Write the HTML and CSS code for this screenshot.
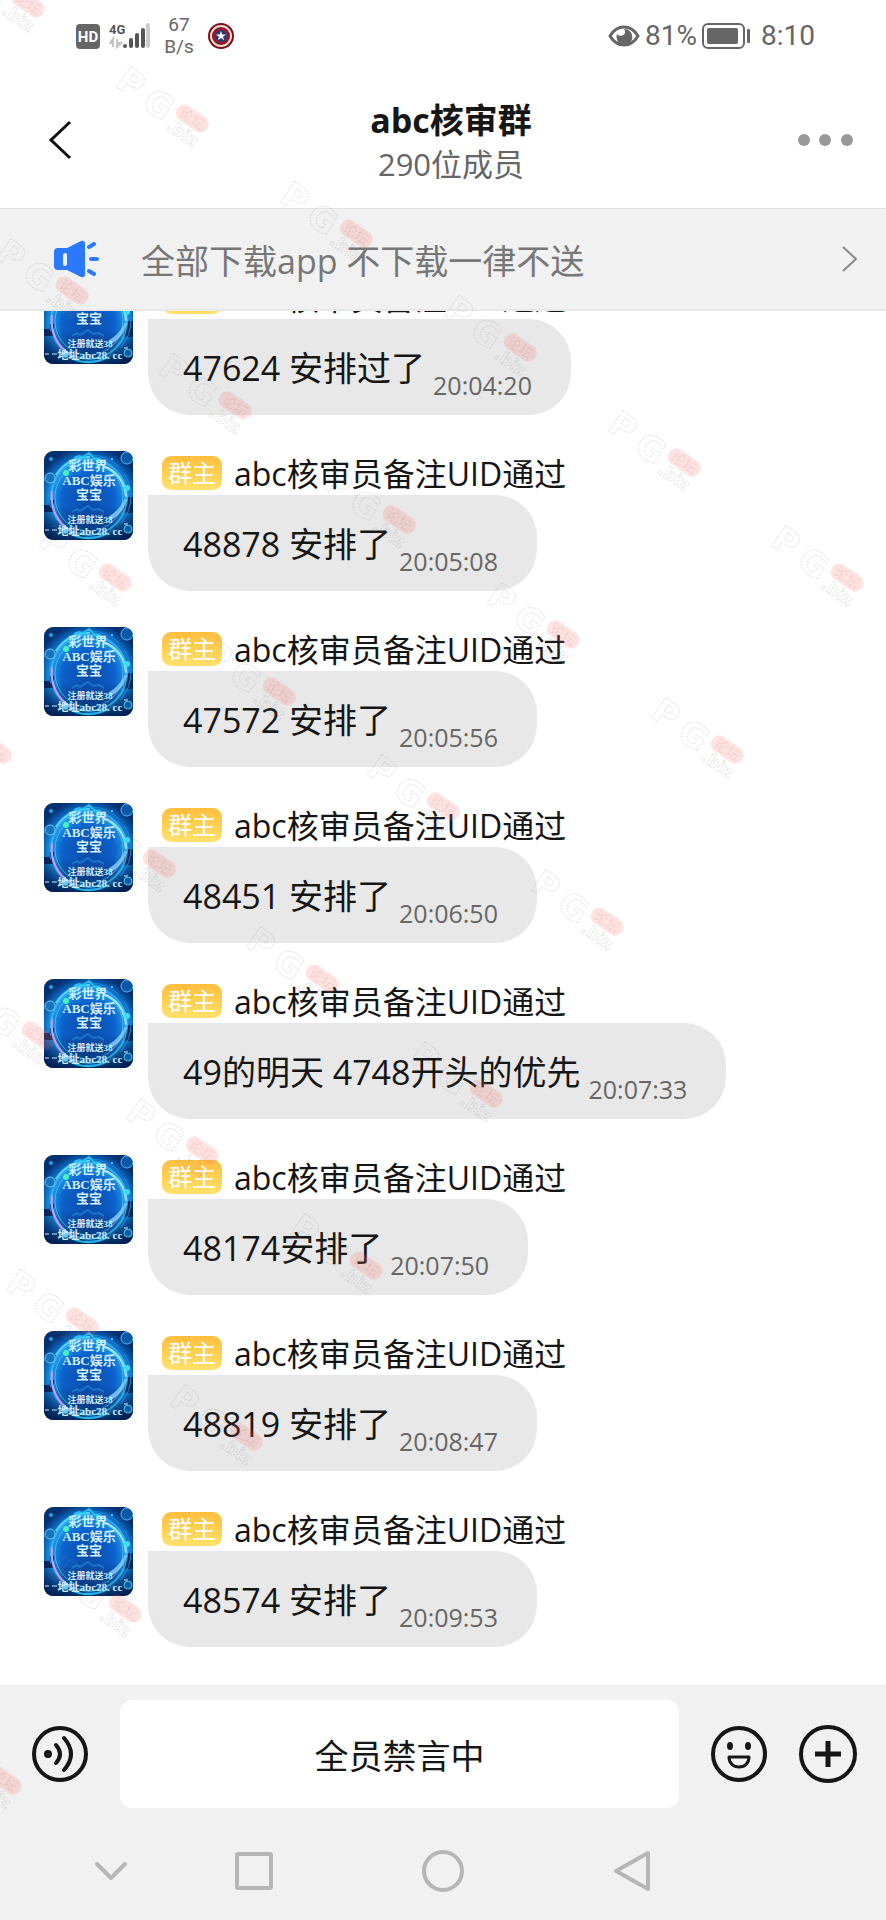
FILE: index.html
```html
<!DOCTYPE html>
<html lang="zh-CN">
<head>
    <meta charset="UTF-8">
    <meta name="viewport" content="width=device-width, initial-scale=1.0">
    <title>abc核审群</title>
    <link rel="stylesheet" href="styles.css">
</head>
<body>
    <!-- Shared drawings -->
    <svg class="defs" width="0" height="0" aria-hidden="true">
        <defs>
            <radialGradient id="glow" cx="50%" cy="55%" r="60%">
                <stop offset="0" stop-color="#0a4aa6"/>
                <stop offset="0.5" stop-color="#0c62cc"/>
                <stop offset="0.7" stop-color="#1a9ae6"/>
                <stop offset="0.86" stop-color="#0b5cb0"/>
                <stop offset="1" stop-color="#05306f"/>
            </radialGradient>
            <linearGradient id="ground" x1="0" y1="0" x2="0" y2="1">
                <stop offset="0" stop-color="#021c4c" stop-opacity="0"/>
                <stop offset="1" stop-color="#021c4c" stop-opacity="0.85"/>
            </linearGradient>
            <symbol id="avatar" viewBox="0 0 89 89">
                <rect width="89" height="89" fill="url(#glow)"/>
                <rect y="54" width="89" height="35" fill="url(#ground)"/>
                <path d="M0 54h5v-5h5v12H0zM80 50h4v-4h5v16h-9z" fill="#04265a"/>
                <circle cx="45" cy="46" r="38" fill="none" stroke="#39b4f5" stroke-width="2" opacity="0.8"/>
                <circle cx="45" cy="46" r="34" fill="none" stroke="#7fdcff" stroke-width="1" opacity="0.5"/>
                <circle cx="46" cy="45" r="41" fill="none" stroke="#1e8ae6" stroke-width="1" stroke-dasharray="30 9"/>
                <path d="M8 40C6 58 14 72 26 80" fill="none" stroke="#c79cf0" stroke-width="2"/>
                <path d="M62 16c12 6 19 17 20 30" fill="none" stroke="#9be9ff" stroke-width="2"/>
                <path d="M64 66c8-5 13-10 17-19l2 3c-4 10-9 15-16 19z" fill="#8fd2ff" opacity="0.8"/>
                <path d="M12 24c8-12 19-18 34-18" fill="none" stroke="#55d6ff" stroke-width="2"/>
                <path d="M30 7l5-2 4 1 6-4 5 5 7 1" fill="none" stroke="#1fc4f5" stroke-width="2"/>
                <path d="M28 61l5-3 3 2 8-5 5 4 6-1 5 3" fill="none" stroke="#2a9df0" stroke-width="2" opacity="0.5"/>
                <path d="M25 82c12 7 27 7 39 0" fill="none" stroke="#28b8ee" stroke-width="2"/>
                <circle cx="83" cy="7" r="6" fill="#0b58a8" stroke="#55bdf0" stroke-width="1"/>
                <circle cx="6" cy="27" r="5" fill="#1673c4" stroke="#66c5f2" stroke-width="1"/>
                <circle cx="84" cy="78" r="4" fill="#0d5ea8" stroke="#4cc8e8" stroke-width="1"/>
                <circle cx="83" cy="37" r="3" fill="#35e0f0"/>
                <circle cx="22" cy="22" r="3" fill="#49f0c8"/>
                <circle cx="68" cy="8" r="1" fill="#6fd8ff"/>
                <circle cx="7" cy="8" r="2" fill="#2f9ce8"/>
                <path d="M1 79h4M8 79h5M80 73h4" stroke="#d6f1ff" stroke-width="1"/>
                <g class="avatar-text">
                    <text x="44" y="19" font-size="13">彩世界</text>
                    <text x="45" y="34" font-size="13">ABC娱乐</text>
                    <text x="45" y="48" font-size="13">宝宝</text>
                    <text x="46" y="72" font-size="9">注册就送38</text>
                    <text x="46" y="84" font-size="11">地址abc28. cc</text>
                </g>
            </symbol>
            <!-- Origin is the centre of the red pill -->
            <g id="mark" transform="rotate(35)">
                <g class="mark-outline">
                    <text x="-71" y="17" font-size="34">P</text>
                    <text x="-36" y="19" font-size="34">G</text>
                    <text x="0" y="23" font-size="17">.biz</text>
                </g>
                <rect x="-18" y="-9" width="36" height="17" rx="8" fill="#f66" fill-opacity="0.18"/>
                <text class="mark-label" x="0" y="5" font-size="14">论坛</text>
            </g>
        </defs>
    </svg>

    <div class="status-bar">
        <div class="status-left">
            <svg class="hd" width="26" height="26" viewBox="0 0 26 26">
                <rect x="1" y="1" width="24" height="25" rx="4" fill="#666"/>
                <text x="13" y="19" text-anchor="middle" font-size="15" fill="#fff">HD</text>
            </svg>
            <svg class="signal" width="42" height="28" viewBox="0 0 42 28">
                <text x="0" y="12" font-size="13">4G</text>
                <path d="M4 25v-8l-3 4h3M8 17v8l4-4H8" fill="none" stroke="#c4c4c4" stroke-width="2"/>
                <rect x="14" y="22" width="4" height="4" rx="2"/>
                <rect x="20" y="16" width="4" height="10" rx="2"/>
                <rect x="26" y="11" width="4" height="15" rx="2"/>
                <rect x="32" y="6" width="4" height="20" rx="2"/>
                <rect x="37" y="1" width="4" height="25" rx="2" fill="#ccc"/>
            </svg>
            <div class="speed">67<br>B/s</div>
            <svg width="28" height="28" viewBox="0 0 28 28">
                <circle cx="14" cy="14" r="13" fill="#7c1119"/>
                <circle cx="14" cy="14" r="10" fill="none" stroke="#f0dcd8" stroke-width="2"/>
                <circle cx="14" cy="14" r="8" fill="#a31922"/>
                <circle cx="14" cy="14" r="6" fill="#263a82"/>
                <path d="M14 9l1.300 3.500h3.700l-3 2.200 1.100 3.600-3.100-2.200-3.100 2.200 1.100-3.600-3-2.200h3.700z" fill="#fff"/>
            </svg>
        </div>
        <div class="status-right">
            <svg width="32" height="24" viewBox="0 0 32 24">
                <path d="M2 12C9 0 23 0 30 12 23 24 9 24 2 12z" fill="none" stroke="#666" stroke-width="3"/>
                <path d="M16 5a8 8 0 1 1-7 5c2 3 7 2 8-1 0-2 0-3-1-4z" fill="#666"/>
            </svg>
            <span class="percent">81%</span>
            <svg width="50" height="28" viewBox="0 0 50 28">
                <rect x="2" y="2" width="41" height="24" rx="5" fill="none" stroke="#666" stroke-width="2"/>
                <rect x="6" y="6" width="31" height="16" rx="2" fill="#666"/>
                <rect x="46" y="7" width="3" height="14" rx="1" fill="#666"/>
            </svg>
            <span class="clock">8:10</span>
        </div>
    </div>

    <header class="header">
        <button class="header-btn back" aria-label="返回">
            <svg width="24" height="40" viewBox="0 0 24 40">
                <path d="M22 2L3 20l19 18" fill="none" stroke="#111" stroke-width="3"/>
            </svg>
        </button>
        <div class="header-title">
            <h1>abc核审群</h1>
            <p>290位成员</p>
        </div>
        <button class="header-btn more" aria-label="更多">
            <svg width="56" height="12" viewBox="0 0 56 12" fill="#999">
                <circle cx="6" cy="6" r="6"/>
                <circle cx="27" cy="6" r="6"/>
                <circle cx="49" cy="6" r="6"/>
            </svg>
        </button>
    </header>

    <a class="notice" href="#">
        <svg width="46" height="38" viewBox="0 0 46 38">
            <path d="M4 8h9L27 1q4-1 4 3v30q0 4-4 3L13 30H4q-4 0-4-4V12q0-4 4-4z" fill="#2b79ff"/>
            <rect x="9" y="13" width="4" height="13" rx="2" fill="#f1f1f1"/>
            <path d="M35 7l5-3M37 19h6M35 31l5 3" fill="none" stroke="#2b79ff" stroke-width="4" stroke-linecap="round"/>
        </svg>
        <span class="notice-text">全部下载app 不下载一律不送</span>
        <svg width="16" height="26" viewBox="0 0 16 26">
            <path d="M1 1l13 12L1 25" fill="none" stroke="#888" stroke-width="2"/>
        </svg>
    </a>

    <main class="chat">
        <div class="message">
            <svg class="avatar"><use href="#avatar"/></svg>
            <div class="message-body">
                <div class="sender"><span class="badge">群主</span><span class="name">abc核审员备注UID通过</span></div>
                <div class="bubble"><span class="text">47624 安排过了</span><time>20:04:20</time></div>
            </div>
        </div>
        <div class="message">
            <svg class="avatar"><use href="#avatar"/></svg>
            <div class="message-body">
                <div class="sender"><span class="badge">群主</span><span class="name">abc核审员备注UID通过</span></div>
                <div class="bubble"><span class="text">48878 安排了</span><time>20:05:08</time></div>
            </div>
        </div>
        <div class="message">
            <svg class="avatar"><use href="#avatar"/></svg>
            <div class="message-body">
                <div class="sender"><span class="badge">群主</span><span class="name">abc核审员备注UID通过</span></div>
                <div class="bubble"><span class="text">47572 安排了</span><time>20:05:56</time></div>
            </div>
        </div>
        <div class="message">
            <svg class="avatar"><use href="#avatar"/></svg>
            <div class="message-body">
                <div class="sender"><span class="badge">群主</span><span class="name">abc核审员备注UID通过</span></div>
                <div class="bubble"><span class="text">48451 安排了</span><time>20:06:50</time></div>
            </div>
        </div>
        <div class="message">
            <svg class="avatar"><use href="#avatar"/></svg>
            <div class="message-body">
                <div class="sender"><span class="badge">群主</span><span class="name">abc核审员备注UID通过</span></div>
                <div class="bubble"><span class="text">49的明天 4748开头的优先</span><time>20:07:33</time></div>
            </div>
        </div>
        <div class="message">
            <svg class="avatar"><use href="#avatar"/></svg>
            <div class="message-body">
                <div class="sender"><span class="badge">群主</span><span class="name">abc核审员备注UID通过</span></div>
                <div class="bubble"><span class="text">48174安排了</span><time>20:07:50</time></div>
            </div>
        </div>
        <div class="message">
            <svg class="avatar"><use href="#avatar"/></svg>
            <div class="message-body">
                <div class="sender"><span class="badge">群主</span><span class="name">abc核审员备注UID通过</span></div>
                <div class="bubble"><span class="text">48819 安排了</span><time>20:08:47</time></div>
            </div>
        </div>
        <div class="message">
            <svg class="avatar"><use href="#avatar"/></svg>
            <div class="message-body">
                <div class="sender"><span class="badge">群主</span><span class="name">abc核审员备注UID通过</span></div>
                <div class="bubble"><span class="text">48574 安排了</span><time>20:09:53</time></div>
            </div>
        </div>
    </main>

    <footer class="composer">
        <button class="composer-btn" aria-label="语音">
            <svg width="58" height="58" viewBox="0 0 58 58" fill="none" stroke="#161616" stroke-width="4" stroke-linecap="round">
                <circle cx="29" cy="29" r="26"/>
                <circle cx="17" cy="29" r="4" fill="#161616" stroke="none"/>
                <path d="M25 20q8 9 0 18M33 13q14 16 0 32"/>
            </svg>
        </button>
        <input class="composer-input" type="text" aria-label="消息" value="全员禁言中" readonly>
        <button class="composer-btn" aria-label="表情">
            <svg width="58" height="58" viewBox="0 0 58 58" fill="none" stroke="#161616" stroke-width="4">
                <circle cx="29" cy="29" r="26"/>
                <ellipse cx="20" cy="21" rx="3" ry="4" fill="#161616" stroke="none"/>
                <ellipse cx="38" cy="21" rx="3" ry="4" fill="#161616" stroke="none"/>
                <path d="M19 32h20c0 6-4 10-10 10s-10-4-10-10z" stroke-width="3" stroke-linejoin="round"/>
            </svg>
        </button>
        <button class="composer-btn" aria-label="添加">
            <svg width="58" height="58" viewBox="0 0 58 58" fill="none" stroke="#161616" stroke-width="5">
                <circle cx="29" cy="29" r="27" stroke-width="4"/>
                <path d="M16 29h26M29 16v26"/>
            </svg>
        </button>
    </footer>

    <nav class="system-nav">
        <button aria-label="收起">
            <svg width="44" height="44" viewBox="0 0 44 44"><path d="M8 15l14 14 14-14" stroke-linecap="round"/></svg>
        </button>
        <button aria-label="最近任务">
            <svg width="44" height="44" viewBox="0 0 44 44"><rect x="5" y="5" width="34" height="34" rx="1"/></svg>
        </button>
        <button aria-label="主屏幕">
            <svg width="44" height="44" viewBox="0 0 44 44"><circle cx="22" cy="22" r="19"/></svg>
        </button>
        <button aria-label="后退">
            <svg width="44" height="44" viewBox="0 0 44 44"><path d="M37 4v36L5 22z"/></svg>
        </button>
    </nav>

    <svg class="watermark" aria-hidden="true">
        <use href="#mark" transform="translate(28 4)"/>
        <use href="#mark" transform="translate(192 119)"/>
        <use href="#mark" transform="translate(356 234)"/>
        <use href="#mark" transform="translate(520 348)"/>
        <use href="#mark" transform="translate(684 463)"/>
        <use href="#mark" transform="translate(847 578)"/>
        <use href="#mark" transform="translate(72 291)"/>
        <use href="#mark" transform="translate(235 406)"/>
        <use href="#mark" transform="translate(399 520)"/>
        <use href="#mark" transform="translate(563 635)"/>
        <use href="#mark" transform="translate(727 750)"/>
        <use href="#mark" transform="translate(115 578)"/>
        <use href="#mark" transform="translate(279 692)"/>
        <use href="#mark" transform="translate(443 807)"/>
        <use href="#mark" transform="translate(607 922)"/>
        <use href="#mark" transform="translate(-5 750)"/>
        <use href="#mark" transform="translate(159 864)"/>
        <use href="#mark" transform="translate(322 979)"/>
        <use href="#mark" transform="translate(486 1094)"/>
        <use href="#mark" transform="translate(38 1036)"/>
        <use href="#mark" transform="translate(202 1151)"/>
        <use href="#mark" transform="translate(366 1266)"/>
        <use href="#mark" transform="translate(82 1322)"/>
        <use href="#mark" transform="translate(246 1437)"/>
        <use href="#mark" transform="translate(125 1609)"/>
        <use href="#mark" transform="translate(5 1781)"/>
    </svg>
</body>
</html>
```
FILE: styles.css
```css
* {
    box-sizing: border-box;
}
body {
    position: relative;
    display: flex;
    flex-direction: column;
    height: 100vh;
    margin: 0;
    background-color: #fff;
    color: #161616;
    font-family: "Open Sans", "Noto Sans CJK SC", sans-serif;
}
button {
    display: flex;
    align-items: center;
    justify-content: center;
    padding: 0;
    border: none;
    background: none;
    cursor: pointer;
}
svg {
    display: block;
    flex-shrink: 0;
}
.defs {
    position: absolute;
}

/* Status bar */
.status-bar {
    display: flex;
    justify-content: space-between;
    height: 71px;
    padding: 0 71px 0 75px;
    color: #666;
    font-family: Roboto, sans-serif;
    font-size: 28px;
}
.status-left, .status-right {
    display: flex;
    align-items: center;
}
.status-left {
    gap: 8px;
}
.hd text, .signal text {
    font-weight: bold;
}
.signal {
    fill: #555;
}
.speed {
    width: 40px;
    font-size: 19px;
    line-height: 22px;
    text-align: center;
}
.percent {
    margin: 0 4px 0 5px;
}
.clock {
    margin-left: 10px;
}

/* Header */
.header {
    display: flex;
    align-items: center;
    height: 137px;
    padding: 0 32px 0 48px;
}
.header-btn {
    width: 56px;
    height: 56px;
}
.back {
    justify-content: flex-start;
}
.header-title {
    flex: 1;
    padding-top: 4px;
    text-align: center;
}
h1 {
    margin: 0;
    font-size: 34px;
    line-height: 44px;
}
.header-title p {
    margin: 0;
    color: #666;
    font-size: 31px;
    line-height: 44px;
}

/* Notice */
.notice {
    display: flex;
    align-items: center;
    height: 103px;
    padding: 0 28px 0 54px;
    border-top: 1px solid #e2e2e2;
    border-bottom: 2px solid #e8e8e8;
    background-color: #f1f1f1;
    color: #777;
    font-size: 34px;
    text-decoration: none;
}
.notice-text {
    flex: 1;
    margin-left: 41px;
    padding-top: 4px;
    line-height: 48px;
}

/* Messages */
.chat {
    display: flex;
    flex: 1;
    flex-direction: column;
    justify-content: flex-end;
    gap: 36px;
    min-height: 0;
    padding: 0 44px 38px;
    overflow: hidden;
}
.message {
    display: flex;
    flex-shrink: 0;
    gap: 15px;
}
.avatar {
    width: 89px;
    height: 89px;
    border-radius: 9px;
}
.avatar-text {
    fill: #d0f0ff;
    font-family: "Liberation Serif", "Noto Sans CJK SC", serif;
    font-weight: bold;
    text-anchor: middle;
}
.message-body {
    display: flex;
    flex-direction: column;
    align-items: flex-start;
}
.sender {
    display: flex;
    align-items: center;
    gap: 12px;
    height: 44px;
    padding-left: 14px;
}
.badge {
    width: 60px;
    height: 34px;
    border-radius: 9px;
    background: linear-gradient(#ffbe3d, #ffe26a);
    color: #fff;
    font-size: 24px;
    line-height: 34px;
    text-align: center;
}
.name {
    padding-top: 2px;
    font-size: 32px;
    line-height: 44px;
}
.bubble {
    display: flex;
    align-items: flex-end;
    gap: 8px;
    height: 96px;
    padding: 0 39px 15px 35px;
    border-radius: 0 42px 42px 42px;
    background-color: #e8e8e8;
}
.text {
    font-size: 34px;
    line-height: 64px;
}
time {
    color: #666;
    font-size: 25px;
    line-height: 30px;
}

/* Composer */
.composer {
    display: flex;
    align-items: center;
    gap: 31px;
    padding: 15px 29px 0 31px;
    background-color: #f1f1f1;
}
.composer-btn {
    width: 58px;
    height: 58px;
}
.composer-input {
    flex: 1;
    min-width: 0;
    height: 108px;
    padding: 0;
    border: none;
    border-radius: 12px;
    background-color: #fff;
    color: #161616;
    font-family: inherit;
    font-size: 34px;
    text-align: center;
    outline: none;
}

/* System navigation */
.system-nav {
    display: grid;
    grid-template-columns: 1fr 2fr 2fr 2fr;
    align-items: center;
    height: 112px;
    padding: 14px 158px 0 64px;
    background-color: #f1f1f1;
}
.system-nav svg {
    fill: none;
    stroke: #b6b6b6;
    stroke-width: 4;
    stroke-linejoin: round;
}

/* Watermark over the whole page */
.watermark {
    position: absolute;
    inset: 0;
    width: 100%;
    height: 100%;
    overflow: hidden;
    pointer-events: none;
}
.mark-outline {
    fill: none;
    stroke: #888;
    stroke-opacity: 0.25;
    stroke-width: 1;
    stroke-dasharray: 2 1;
    font-family: "DejaVu Sans", sans-serif;
    font-weight: bold;
    text-anchor: middle;
}
.mark-label {
    fill: #a55;
    fill-opacity: 0.15;
    text-anchor: middle;
}
```
